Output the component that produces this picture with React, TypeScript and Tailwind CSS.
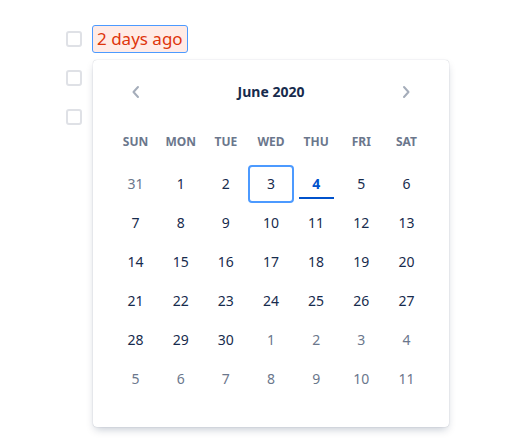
import React from "react";

const weekdays = ["SUN", "MON", "TUE", "WED", "THU", "FRI", "SAT"];

type Day = { n: number; out?: boolean; selected?: boolean; today?: boolean };

const rows: Day[][] = [
  [{ n: 31, out: true }, { n: 1 }, { n: 2 }, { n: 3, selected: true }, { n: 4, today: true }, { n: 5 }, { n: 6 }],
  [7, 8, 9, 10, 11, 12, 13].map((n) => ({ n })),
  [14, 15, 16, 17, 18, 19, 20].map((n) => ({ n })),
  [21, 22, 23, 24, 25, 26, 27].map((n) => ({ n })),
  [{ n: 28 }, { n: 29 }, { n: 30 }, { n: 1, out: true }, { n: 2, out: true }, { n: 3, out: true }, { n: 4, out: true }],
  [5, 6, 7, 8, 9, 10, 11].map((n) => ({ n, out: true })),
];

function Checkbox() {
  return <div className="w-4 h-4 rounded-[3px] border-2 border-[#dfe1e6] bg-white" />;
}

function Chevron({ dir }: { dir: "left" | "right" }) {
  return (
    <svg width="16" height="16" viewBox="0 0 16 16" fill="none">
      <path
        d={dir === "left" ? "M10 3 L5.5 8 L10 13" : "M6 3 L10.5 8 L6 13"}
        stroke="#a5adba"
        strokeWidth="2"
        strokeLinecap="round"
        strokeLinejoin="round"
      />
    </svg>
  );
}

export default function App() {
  return (
    <div
      className="w-[511px] h-[447px] bg-white pt-[19px] pl-[66px]"
      style={{ fontFamily: '"Noto Sans", "Open Sans", sans-serif' }}
    >
      <div className="flex items-center h-[39px] gap-[10px]">
        <Checkbox />
        <div className="relative">
          <div className="h-[28px] px-[4px] flex items-center rounded-[3px] border border-[#4c9aff] bg-[#ffebe6] text-[#de350b] text-[17px] leading-none">
            2 days ago
          </div>
          <div className="absolute top-[35px] left-[1px] w-[356px] h-[367px] bg-white rounded-[4px] shadow-[0_4px_8px_-2px_rgba(9,30,66,0.25),0_0_1px_rgba(9,30,66,0.31)] px-[20px] pt-[17px] z-10">
            <div className="grid grid-cols-7 h-[30px] items-center">
              <div className="flex justify-center">
                <Chevron dir="left" />
              </div>
              <div className="col-span-5 text-center text-[14px] font-bold text-[#172b4d]">June 2020</div>
              <div className="flex justify-center">
                <Chevron dir="right" />
              </div>
            </div>
            <div className="grid grid-cols-7 mt-[23px] h-[24px] items-center mb-[11px]">
              {weekdays.map((w) => (
                <div key={w} className="text-center text-[12px] font-bold text-[#6b778c]">
                  {w}
                </div>
              ))}
            </div>
            <div className="flex flex-col gap-y-[1px]">
              {rows.map((r, i) => (
                <div key={i} className="grid grid-cols-7">
                  {r.map((d, j) => (
                    <div
                      key={j}
                      className={
                        "relative h-[38px] flex items-center justify-center text-[14px] rounded-[4px] " +
                        (d.selected ? "border-2 border-[#4c9aff] " : "") +
                        (d.today ? "font-bold text-[#0052cc] " : d.out ? "text-[#6b778c] " : "text-[#172b4d] ")
                      }
                    >
                      {d.n}
                      {d.today && (
                        <div className="absolute left-[5px] right-[5px] bottom-[4px] h-[2px] bg-[#0052cc]" />
                      )}
                    </div>
                  ))}
                </div>
              ))}
            </div>
          </div>
        </div>
      </div>
      <div className="flex items-center h-[39px]">
        <Checkbox />
      </div>
      <div className="flex items-center h-[39px]">
        <Checkbox />
      </div>
    </div>
  );
}
